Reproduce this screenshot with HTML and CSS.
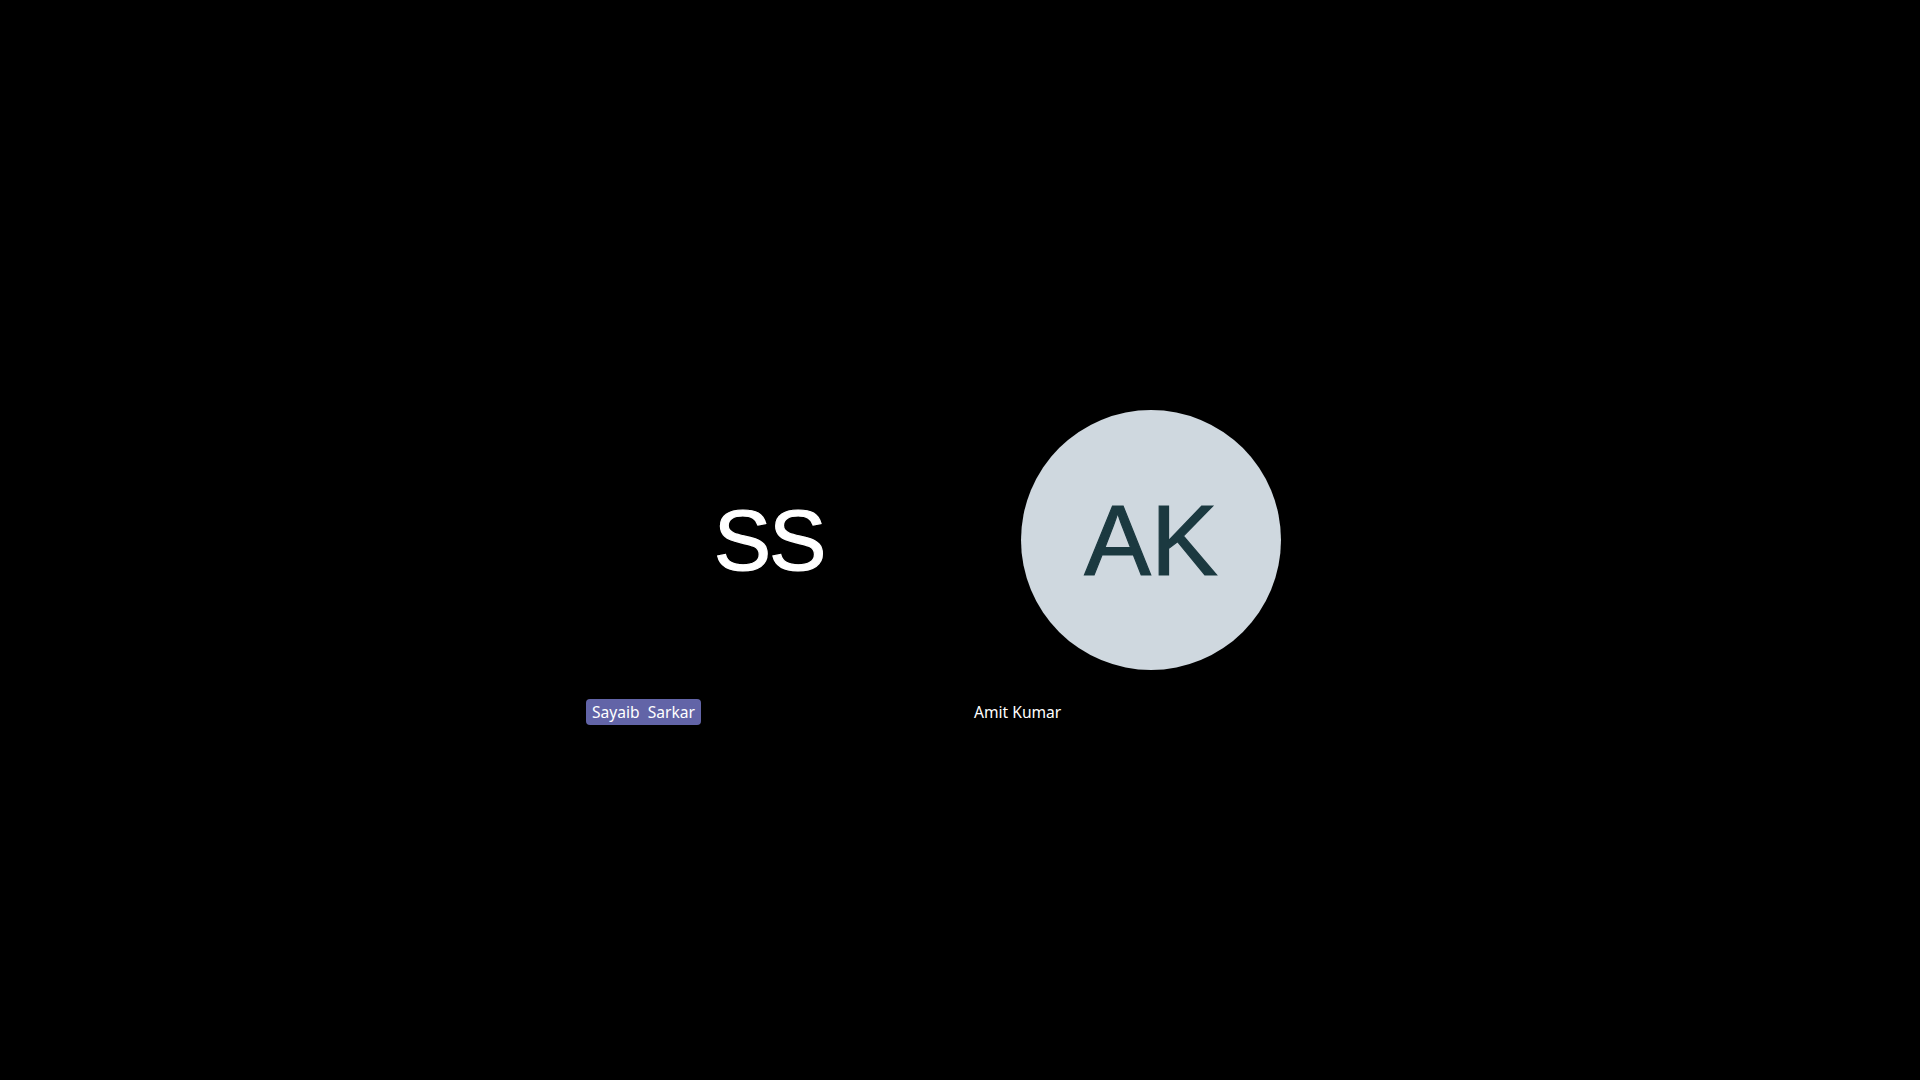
FILE: index.html
```html
<!DOCTYPE html>
<html lang="en">
<head>
<meta charset="utf-8">
<title>Meeting</title>
<link rel="stylesheet" href="styles.css">
</head>
<body>
<main class="stage">
  <section class="grid">
    <div class="tile">
      <div class="avatar avatar-dark">SS</div>
      <div class="name name-active">Sayaib&nbsp; Sarkar</div>
    </div>
    <div class="tile">
      <div class="avatar avatar-light">AK</div>
      <div class="name">Amit Kumar</div>
    </div>
  </section>
</main>
</body>
</html>
```

FILE: styles.css
```css
html, body {
  margin: 0;
  padding: 0;
  background: #000;
  height: 100%;
}
.stage {
  width: 1920px;
  height: 1080px;
  display: flex;
  align-items: center;
  justify-content: center;
  background: #000;
}
.grid {
  display: flex;
  gap: 0;
}
.tile {
  width: 382px;
  height: 386px;
  display: grid;
}
.avatar {
  grid-area: 1 / 1;
  justify-self: center;
  align-self: center;
  width: 260px;
  height: 260px;
  border-radius: 50%;
  display: flex;
  align-items: center;
  justify-content: center;
  font-family: "Liberation Sans", Arial, sans-serif;
  line-height: 1;
  -webkit-text-stroke: 1.2px currentColor;
}
.avatar-dark {
  background: #000;
  color: #fff;
  font-size: 86px;
  letter-spacing: -2px;
}
.avatar-light {
  background: #cfd8df;
  color: #1b3940;
  font-size: 100px;
}
.name {
  grid-area: 1 / 1;
  justify-self: start;
  align-self: end;
  margin: 0 0 8px 8px;
  height: 26px;
  padding: 0 6px;
  box-sizing: border-box;
  display: flex;
  align-items: center;
  border-radius: 4px;
  color: #fff;
  font-family: "Noto Sans", "Open Sans", sans-serif;
  font-size: 15.6px;
  white-space: pre;
}
.name-active {
  background: #6264a7;
}
```
